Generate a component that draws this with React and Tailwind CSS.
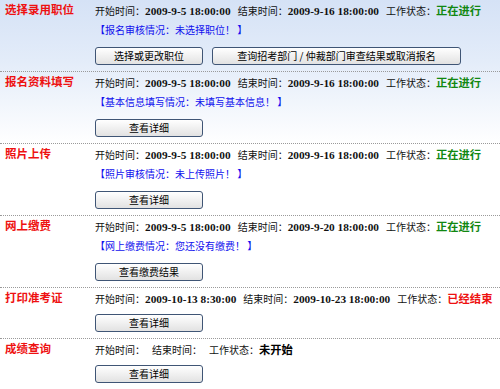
import React from "react";

const cjk = { fontFamily: '"Noto Sans CJK SC", sans-serif' };
const num = { fontFamily: '"Liberation Serif", "Noto Sans CJK SC", serif' };

function Btn({ children, w }) {
  return (
    <button
      className={`h-[18px] ${w} rounded-[3px] border border-[#3f5575] bg-gradient-to-b from-white to-[#e2e2e2] text-[10px] leading-[14px] text-black`}
      style={cjk}
    >
      {children}
    </button>
  );
}

function Field({ label, value }) {
  return (
    <span className="whitespace-nowrap">
      <span className="text-[10px]">{label}</span>
      <span className="text-[11.3px] font-bold" style={num}>
        {value}
      </span>
    </span>
  );
}

function Row({ title, start, end, status, statusClass, info, buttons, first }) {
  return (
    <div
      className={`flex ${first ? "" : "border-t border-dotted border-[#9a9a9a]"}`}
    >
      <div className="w-[95px] shrink-0 pl-[5px]">
        <div
          className="h-[19px] text-[11.5px] font-bold leading-[19px] text-[#ee1111]"
          style={cjk}
        >
          {title}
        </div>
      </div>
      <div className="flex-1 pb-[6px]" style={cjk}>
        <div className="flex h-[19px] items-center gap-[7px] whitespace-nowrap leading-[19px] text-[#111]">
          <Field label="开始时间：" value={start} />
          <Field label="结束时间：" value={end} />
          <span className="whitespace-nowrap">
            <span className="text-[10px]">工作状态：</span>
            <span className={`text-[11.3px] font-bold ${statusClass}`} style={cjk}>
              {status}
            </span>
          </span>
        </div>
        {info && (
          <div className="h-[21px] text-[10px] leading-[21px] text-[#1010ee] [text-spacing-trim:space-all]">
            {info}
          </div>
        )}
        <div className="mt-[7px] flex gap-[9px]">{buttons}</div>
      </div>
    </div>
  );
}

export default function App() {
  return (
    <div
      className="h-[389px] w-[500px] overflow-hidden bg-[linear-gradient(to_bottom,#d5e2f6_0px,#e3ecf9_60px,#ffffff_145px)]"
      style={cjk}
    >
      <Row
        first
        title="选择录用职位"
        start="2009-9-5 18:00:00"
        end="2009-9-16 18:00:00"
        status="正在进行"
        statusClass="text-[#118811]"
        info="【报名审核情况：未选择职位！ 】"
        buttons={
          <>
            <Btn w="w-[108px]">选择或更改职位</Btn>
            <Btn w="w-[249px]">查询招考部门 / 仲裁部门审查结果或取消报名</Btn>
          </>
        }
      />
      <Row
        title="报名资料填写"
        start="2009-9-5 18:00:00"
        end="2009-9-16 18:00:00"
        status="正在进行"
        statusClass="text-[#118811]"
        info="【基本信息填写情况：未填写基本信息！ 】"
        buttons={<Btn w="w-[108px]">查看详细</Btn>}
      />
      <Row
        title="照片上传"
        start="2009-9-5 18:00:00"
        end="2009-9-16 18:00:00"
        status="正在进行"
        statusClass="text-[#118811]"
        info="【照片审核情况：未上传照片！ 】"
        buttons={<Btn w="w-[108px]">查看详细</Btn>}
      />
      <Row
        title="网上缴费"
        start="2009-9-5 18:00:00"
        end="2009-9-20 18:00:00"
        status="正在进行"
        statusClass="text-[#118811]"
        info="【网上缴费情况：您还没有缴费！ 】"
        buttons={<Btn w="w-[108px]">查看缴费结果</Btn>}
      />
      <Row
        title="打印准考证"
        start="2009-10-13 8:30:00"
        end="2009-10-23 18:00:00"
        status="已经结束"
        statusClass="text-[#ee1111]"
        buttons={<Btn w="w-[108px]">查看详细</Btn>}
      />
      <Row
        title="成绩查询"
        start=""
        end=""
        status="未开始"
        statusClass="text-black"
        buttons={<Btn w="w-[108px]">查看详细</Btn>}
      />
    </div>
  );
}
